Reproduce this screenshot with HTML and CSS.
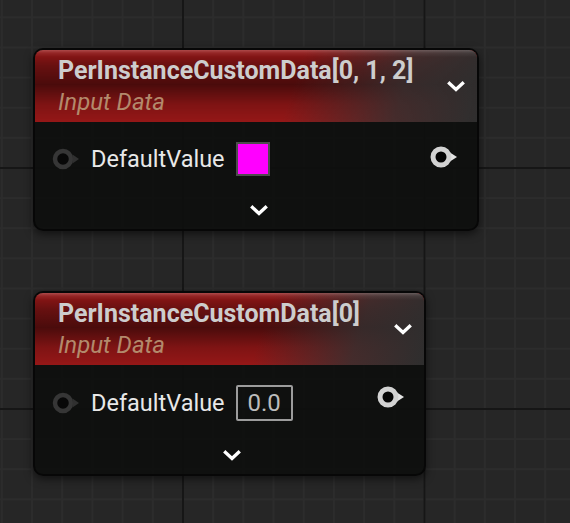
FILE: index.html
```html
<!DOCTYPE html>
<html lang="en">
<head>
<meta charset="utf-8">
<title>Material Graph</title>
<link rel="stylesheet" href="styles.css">
</head>
<body>
<main class="graph">
  <section class="node">
    <header class="node-header">
      <div class="titles">
        <div class="title">PerInstanceCustomData[0, 1, 2]</div>
        <div class="subtitle">Input Data</div>
      </div>
      <svg class="chevron header-chevron" viewBox="0 0 18 11" width="18" height="11"><path d="M2.5 2.5 L9 8.5 L15.5 2.5" /></svg>
    </header>
    <div class="node-body">
      <div class="pin-row">
        <div class="input">
          <svg class="pin" viewBox="0 0 30 22" width="30" height="22"><circle class="pin-in-ring" cx="11" cy="11" r="8" /><polygon class="pin-in-arrow" points="20.5,6.5 27,11 20.5,15.5" /></svg>
          <span class="label">DefaultValue</span>
          <span class="swatch"></span>
        </div>
        <svg class="pin pin-out" viewBox="0 0 30 22" width="30" height="22"><polygon class="pin-out-arrow" points="20,6.5 27,11 20,15.5" /><circle class="pin-out-ring" cx="11" cy="11" r="8" /></svg>
      </div>
      <div class="expander"><svg class="chevron" viewBox="0 0 18 11" width="18" height="11"><path d="M2.5 2.5 L9 8.5 L15.5 2.5" /></svg></div>
    </div>
  </section>

  <section class="node">
    <header class="node-header">
      <div class="titles">
        <div class="title">PerInstanceCustomData[0]</div>
        <div class="subtitle">Input Data</div>
      </div>
      <svg class="chevron header-chevron" viewBox="0 0 18 11" width="18" height="11"><path d="M2.5 2.5 L9 8.5 L15.5 2.5" /></svg>
    </header>
    <div class="node-body">
      <div class="pin-row pin-row-tall">
        <div class="input">
          <svg class="pin" viewBox="0 0 30 22" width="30" height="22"><circle class="pin-in-ring" cx="11" cy="11" r="8" /><polygon class="pin-in-arrow" points="20.5,6.5 27,11 20.5,15.5" /></svg>
          <span class="label">DefaultValue</span>
          <span class="number-box">0.0</span>
        </div>
        <svg class="pin pin-out pin-out-high" viewBox="0 0 30 22" width="30" height="22"><polygon class="pin-out-arrow" points="20,6.5 27,11 20,15.5" /><circle class="pin-out-ring" cx="11" cy="11" r="8" /></svg>
      </div>
      <div class="expander"><svg class="chevron" viewBox="0 0 18 11" width="18" height="11"><path d="M2.5 2.5 L9 8.5 L15.5 2.5" /></svg></div>
    </div>
  </section>
</main>
</body>
</html>
```

FILE: styles.css
```css
html, body {
  margin: 0;
  padding: 0;
}

body {
  font-family: Roboto, "Liberation Sans", sans-serif;
  background-color: #262626;
}

.graph {
  box-sizing: border-box;
  min-height: 100vh;
  padding: 48px 0 0 33px;
  display: flex;
  flex-direction: column;
  align-items: flex-start;
  gap: 60px;
  background-color: #262626;
  background-image:
    linear-gradient(90deg, #161616 0, #161616 2px, transparent 2px),
    linear-gradient(180deg, #161616 0, #161616 2px, transparent 2px),
    linear-gradient(90deg, #2c2c2c 0, #2c2c2c 2px, transparent 2px),
    linear-gradient(180deg, #2c2c2c 0, #2c2c2c 2px, transparent 2px);
  background-size:
    241.5px 100%,
    100% 241px,
    30.1875px 100%,
    100% 30.125px;
  background-position:
    182px 0,
    0 167px,
    182px 0,
    0 167px;
}

/* ---------- node ---------- */

.node {
  border: 2px solid #070707;
  border-radius: 10px;
  overflow: hidden;
  background: rgba(13, 14, 13, 0.9);
  box-shadow: 0 3px 8px rgba(0, 0, 0, 0.55);
}

.node-header {
  display: flex;
  align-items: center;
  padding: 6px 12px 6px 23px;
  background:
    linear-gradient(180deg, rgba(255, 255, 255, 0.22) 0, rgba(255, 255, 255, 0.07) 3px, rgba(255, 255, 255, 0) 7px),
    linear-gradient(108deg, rgba(50, 49, 49, 0) 58%, rgba(50, 49, 49, 0.8) 82%, rgba(46, 46, 46, 1) 100%),
    linear-gradient(180deg, rgba(0, 0, 0, 0) 0%, rgba(0, 0, 0, 0.3) 22%, rgba(0, 0, 0, 0.5) 48%, rgba(0, 0, 0, 0.15) 76%, rgba(0, 0, 0, 0) 100%),
    #951717;
}

.titles {
  display: flex;
  flex-direction: column;
}

.title {
  font-size: 25px;
  line-height: 29px;
  font-weight: 700;
  color: #cdcdcd;
  white-space: nowrap;
}

.subtitle {
  margin-top: 4px;
  font-size: 24px;
  line-height: 27px;
  font-style: italic;
  color: #b38a6c;
}

.chevron {
  display: block;
  fill: none;
  stroke: #ffffff;
  stroke-width: 3.4;
  stroke-linecap: square;
  stroke-linejoin: miter;
}

.header-chevron {
  margin-left: 34px;
  margin-top: 1px;
}

/* ---------- body ---------- */

.node-body {
  padding: 19px 17px 13px 17px;
}

.pin-row {
  display: flex;
  align-items: center;
  justify-content: space-between;
  min-height: 36px;
}

.pin-row-tall {
  min-height: 38px;
}

.input {
  display: flex;
  align-items: center;
}

.pin {
  display: block;
  flex: none;
}

.pin-in-ring {
  fill: #080808;
  stroke: #363636;
  stroke-width: 4.5;
}

.pin-in-arrow {
  fill: #303030;
}

.pin-out {
  margin-bottom: 5px;
}

.pin-out-high {
  margin-bottom: 13px;
}

.pin-out-ring {
  fill: #050505;
  stroke: #d2d2d2;
  stroke-width: 5;
}

.pin-out-arrow {
  fill: #e4e4e4;
}

.label {
  margin-left: 9px;
  font-size: 23.5px;
  line-height: 27px;
  color: #e8e8e8;
}

.swatch {
  box-sizing: border-box;
  width: 34px;
  height: 34px;
  margin-left: 11px;
  border: 2px solid #4d4d4d;
  background: #ff00ff;
}

.number-box {
  box-sizing: border-box;
  height: 36px;
  margin-left: 11px;
  padding: 0 10px;
  border: 2px solid #9c9c9c;
  border-radius: 2px;
  font-size: 24px;
  line-height: 32px;
  color: #bcbcbc;
}

.expander {
  display: flex;
  justify-content: center;
  padding-left: 5px;
  margin-top: 28px;
}
```
